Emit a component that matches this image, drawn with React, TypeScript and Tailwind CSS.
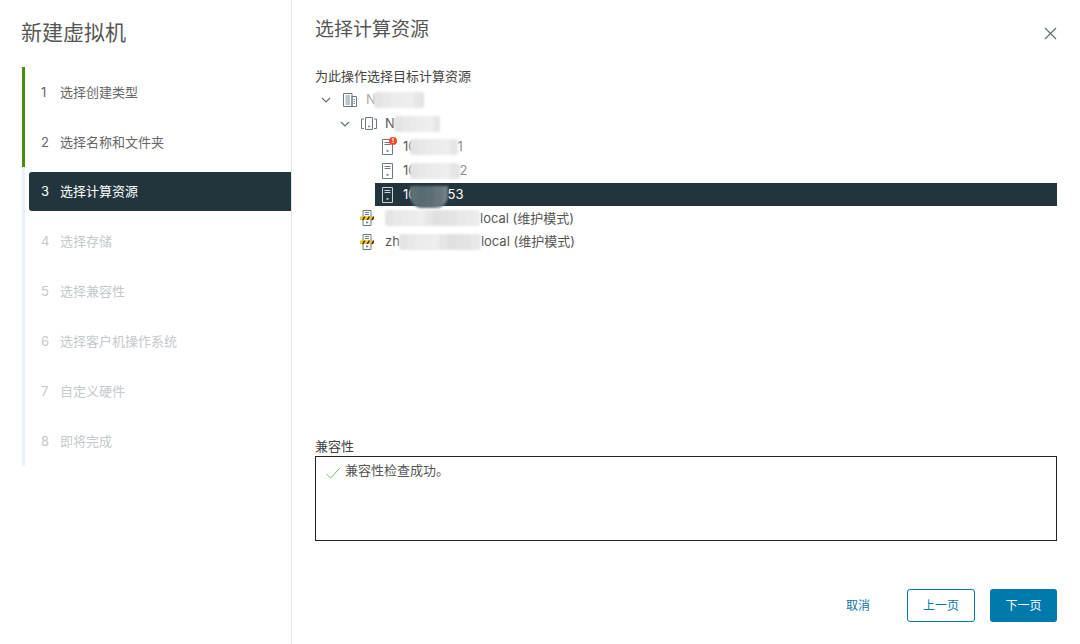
import React from 'react';

const cjk = { fontFamily: '"Inter", "Noto Sans CJK SC", sans-serif' };

const steps = [
  { n: 1, label: '选择创建类型', state: 'done' },
  { n: 2, label: '选择名称和文件夹', state: 'done' },
  { n: 3, label: '选择计算资源', state: 'active' },
  { n: 4, label: '选择存储', state: 'todo' },
  { n: 5, label: '选择兼容性', state: 'todo' },
  { n: 6, label: '选择客户机操作系统', state: 'todo' },
  { n: 7, label: '自定义硬件', state: 'todo' },
  { n: 8, label: '即将完成', state: 'todo' },
];

// pixelated patch hiding host names
const Mosaic = ({ width, dark, className = '' }: { width: number; dark?: boolean; className?: string }) => {
  const shades = dark
    ? ['#5d6d74', '#66757b', '#6f7c82', '#5a6a71', '#717e84', '#64747a', '#5d6d74', '#68777d']
    : ['#e4e4e4', '#ececec', '#e0e0e0', '#e8e8e8', '#eeeeee', '#e2e2e2', '#ebebeb', '#e6e6e6'];
  const cells = Math.ceil(width / 8);
  return (
    <span
      className={`inline-flex shrink-0 overflow-hidden blur-[1px] ${dark ? 'h-[22px] translate-y-[2px] rounded-b-[12px]' : 'h-[16px] rounded-[3px]'} ${className}`}
      style={{ width }}
    >
      {Array.from({ length: cells }).map((_, i) => (
        <span key={i} className="block w-[8px] h-full shrink-0" style={{ background: shades[(i * 3) % 8] }} />
      ))}
    </span>
  );
};

const Chevron = () => (
  <svg width="10" height="10" viewBox="0 0 10 10" fill="none" stroke="#5f7078" strokeWidth="1.1">
    <path d="M1 3l4 4 4-4" />
  </svg>
);

const Datacenter = () => (
  <svg width="14" height="14" viewBox="0 0 14 14" fill="none" stroke="#6b7a82" strokeWidth="1">
    <path d="M.5.5h8.5v13H.5zM9 3.5h4.5v10H9z" />
    <path d="M2.5 3h4.5M2.5 5h4.5M2.5 7h4.5M2.5 9h4.5M2.5 11h4.5M10.5 6.5h1.5M10.5 8.5h1.5M10.5 10.5h1.5" strokeWidth="0.9" />
  </svg>
);

const Cluster = () => (
  <svg width="16" height="15" viewBox="0 0 16 15" fill="none" stroke="#6b7a82" strokeWidth="1">
    <path d="M4.5 1.5h7v12h-7z" />
    <path d="M3 3H.5v9.5H3M13 3h2.5v9.5H13" />
    <rect x="7.2" y="9.6" width="1.6" height="1.6" fill="#6b7a82" stroke="none" />
  </svg>
);

const Host = ({ color = '#6b7a82' }: { color?: string }) => (
  <svg width="11" height="16" viewBox="0 0 11 16" fill="none" stroke={color} strokeWidth="1">
    <path d="M.5.5h10v15H.5z" />
    <path d="M2.5 3.5h6M2.5 5.5h6" />
    <rect x="4.6" y="11" width="1.8" height="1.8" fill={color} stroke="none" />
  </svg>
);

const AlertHost = () => (
  <span className="relative flex">
    <Host />
    <span className="absolute -top-[2px] -right-[4px] w-[8px] h-[8px] rounded-full bg-[#ef4b28] text-white text-[6px] leading-[8px] text-center font-bold">!</span>
  </span>
);

const MaintenanceHost = () => (
  <svg width="14" height="16" viewBox="0 0 14 16" fill="none">
    <path d="M3 .5h8v15H3z" stroke="#6b7a82" fill="#fff" />
    <path d="M5 2.5h4M5 4.5h4" stroke="#6b7a82" />
    <rect x="6.1" y="11.5" width="1.8" height="1.8" fill="#6b7a82" />
    <rect x="0" y="6.5" width="14" height="3.5" fill="#f0c419" />
    <path d="M2 10l2-3.5h1.6l-2 3.5zM6.5 10l2-3.5h1.6l-2 3.5zM11 10l2-3.5h1V8l-1.2 2z" fill="#33302a" />
  </svg>
);

const TreeRow = ({ children, className = '' }: { children: React.ReactNode; className?: string }) => (
  <div className={`flex items-center h-[23.7px] text-[13px] whitespace-nowrap ${className}`}>{children}</div>
);

export default function App() {
  return (
    <div className="flex w-[1080px] h-[644px] bg-white overflow-hidden text-[#565656]" style={cjk}>
      {/* wizard steps */}
      <aside className="w-[292px] h-full shrink-0 border-r border-[#dde5e9]">
        <h1 className="pl-[21px] pt-[19px] h-[47px] text-[21px] leading-[28px] font-normal text-[#565656]">新建虚拟机</h1>
        <ol className="mt-[20px] ml-[22px]">
          {steps.map((s) => (
            <li
              key={s.n}
              className={`h-[49.85px] flex items-center border-l-[3px] ${s.state === 'done' ? 'border-[#4a8a0c]' : 'border-[#e9f2f7]'}`}
            >
              <div
                className={`flex items-center w-full h-[39px] ml-[4px] pl-[12px] pt-[1px] text-[13px] ${
                  s.state === 'active'
                    ? 'bg-[#22343c] text-white rounded-l-[3px]'
                    : s.state === 'done'
                      ? 'text-[#666666]'
                      : 'text-[#c4c9cc]'
                }`}
              >
                <span className="w-[19px]">{s.n}</span>
                <span>{s.label}</span>
              </div>
            </li>
          ))}
        </ol>
      </aside>

      {/* step content */}
      <main className="flex-1 flex flex-col h-full pl-[23px] pr-[23px]">
        <div className="flex items-start justify-between pt-[16px] h-[67px]">
          <h2 className="text-[19px] leading-[28px] font-normal text-[#565656]">选择计算资源</h2>
          <button className="mt-[11px] text-[#5f7078]">
            <svg width="13" height="13" viewBox="0 0 13 13" fill="none" stroke="currentColor" strokeWidth="1.2">
              <path d="M1 1l11 11M12 1L1 12" />
            </svg>
          </button>
        </div>
        <div className="h-[18px] text-[13px] leading-[18px] text-[#444444]">为此操作选择目标计算资源</div>

        <div className="mt-[3px]">
          <TreeRow>
            <span className="w-[6px]" />
            <Chevron />
            <span className="w-[12px]" />
            <Datacenter />
            <span className="w-[9px]" />
            <span className="text-[#a9a9a9]">N</span>
            <Mosaic width={50} className="-ml-[2px]" />
          </TreeRow>
          <TreeRow>
            <span className="w-[25px]" />
            <Chevron />
            <span className="w-[11px]" />
            <Cluster />
            <span className="w-[8px]" />
            <span>N</span>
            <Mosaic width={46} className="-ml-[1px]" />
          </TreeRow>
          <TreeRow>
            <span className="w-[67px]" />
            <AlertHost />
            <span className="w-[10px]" />
            <span>10</span>
            <Mosaic width={48} className="-ml-[7px]" />
            <span className="text-[#8c8c8c]">1</span>
          </TreeRow>
          <TreeRow>
            <span className="w-[67px]" />
            <Host />
            <span className="w-[10px]" />
            <span>10</span>
            <Mosaic width={50} className="-ml-[7px]" />
            <span className="text-[#8c8c8c]">2</span>
          </TreeRow>
          <TreeRow className="bg-[#22343c] text-white ml-[60px]">
            <span className="w-[7px]" />
            <Host color="#c9d2d6" />
            <span className="w-[10px]" />
            <span>10</span>
            <Mosaic width={38} dark className="-ml-[7px]" />
            <span>53</span>
          </TreeRow>
          <TreeRow>
            <span className="w-[45px]" />
            <MaintenanceHost />
            <span className="w-[11px]" />
            <Mosaic width={95} />
            <span>local (维护模式)</span>
          </TreeRow>
          <TreeRow>
            <span className="w-[45px]" />
            <MaintenanceHost />
            <span className="w-[11px]" />
            <span>zh</span>
            <Mosaic width={82} className="-ml-[1px]" />
            <span>local (维护模式)</span>
          </TreeRow>
        </div>

        <div className="mt-auto h-[18px] text-[13px] leading-[18px] text-[#444444]">兼容性</div>
        <div className="mt-[1px] h-[85px] border border-[#222222] flex items-start pt-[4px] pl-[10px] text-[13px] leading-[18px] text-[#565656]">
          <svg className="mt-[7px] mr-[5px]" width="14" height="11" viewBox="0 0 14 11" fill="none" stroke="#7db862" strokeWidth="1">
            <path d="M.5 6l4 4 9-9.5" />
          </svg>
          兼容性检查成功。
        </div>

        <div className="flex items-center justify-end mt-[48px] mb-[22px] h-[33px] text-[12px]">
          <button className="mr-[37px] text-[#0a76a8]">取消</button>
          <button className="w-[68px] h-[33px] mr-[15px] rounded-[3px] border border-[#0079ad] text-[#0079ad] bg-white">上一页</button>
          <button className="w-[67px] h-[33px] rounded-[3px] bg-[#0079ad] text-white">下一页</button>
        </div>
      </main>
    </div>
  );
}
